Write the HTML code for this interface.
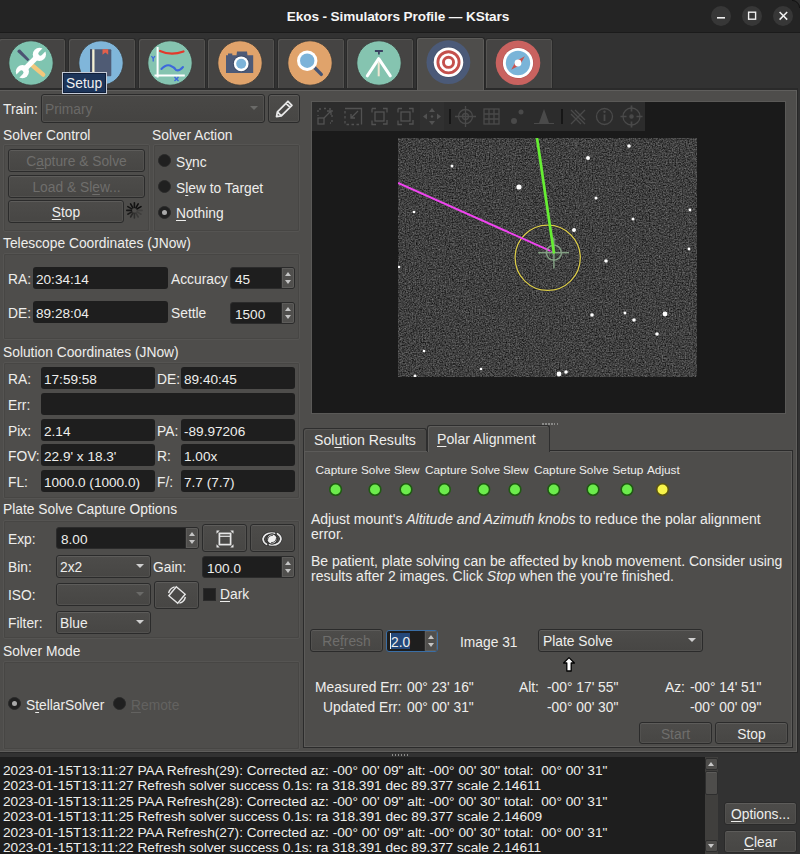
<!DOCTYPE html>
<html><head><meta charset="utf-8">
<style>
*{box-sizing:border-box;margin:0;padding:0}
html,body{width:800px;height:854px;overflow:hidden;background:#323232}
body{position:relative;font-family:"Liberation Sans",sans-serif;font-size:13.8px;color:#eeeeec}
.a{position:absolute}
.t{position:absolute;white-space:pre;line-height:20px}
.dis{color:#6f6e6c}
.title{left:0;top:0;width:800px;height:33px;background:#242424;border-bottom:1px solid #1b1b1b}
.wb{position:absolute;top:6px;width:20px;height:20px;border-radius:50%;background:#373737}
.tab{position:absolute;top:38px;width:68px;height:51px;background:#454443;border:1px solid #2a2a2a;border-bottom:none;border-radius:3px 3px 0 0;box-shadow:inset 1px 1px 0 #555452, inset -1px 0 0 #52514f}
.tab.sel{top:37px;height:53px;width:69px;background:#4e4d4b;z-index:3;border-color:#262626;box-shadow:inset 1px 1px 0 #5c5b59, inset -1px 0 0 #5c5b59}
.panel{left:-2px;top:88px;width:800px;height:665px;background:#4e4d4b;border:1px solid #272727;border-top:2px solid #2a2a2a;box-shadow:inset -1px -1px 0 #5f5e5c, inset 1px 1px 0 #5f5e5c}
.grp{position:absolute;border:1px solid #555452;border-radius:2px;box-shadow:inset 1px 1px 0 #474644, inset -1px -1px 0 #474644}
.fld{font-size:13.6px;position:absolute;background:#1e1e1e;border-radius:3px;height:22px;display:flex;align-items:center;padding-left:3px;padding-top:2px;white-space:pre}
.btn{position:absolute;border:1px solid #2b2b2b;border-radius:3px;background:linear-gradient(#4d4c4a,#474644);box-shadow:inset 0 1px 0 #5d5c5a, inset 0 0 0 1px #52514f;display:flex;align-items:center;justify-content:center;white-space:pre;padding-top:2px}
.cmb{position:absolute;border:1px solid #2b2b2b;border-radius:3px;background:linear-gradient(#4d4c4a,#474644);box-shadow:inset 0 1px 0 #5d5c5a, inset 0 0 0 1px #52514f;display:flex;align-items:center;padding-left:3px;padding-top:2px;white-space:pre}
.arr{position:absolute;right:6px;top:50%;margin-top:-2.5px;width:0;height:0;border-left:4px solid transparent;border-right:4px solid transparent;border-top:4px solid #cfcfcf}
.spin{font-size:13.6px;position:absolute;background:#1e1e1e;border-radius:3px;height:22px;display:flex;align-items:center;padding-left:4px;padding-top:2px;white-space:pre;border:1px solid #2b2b2b}
.sb{position:absolute;right:0;top:0;bottom:0;width:13px;background:#504f4d;border-left:1px solid #2b2b2b;border-radius:0 2px 2px 0;box-shadow:inset 0 0 0 1px #5d5c5a}
.sb:before{content:"";position:absolute;left:2.5px;top:4px;border-left:3.5px solid transparent;border-right:3.5px solid transparent;border-bottom:4px solid #c4c4c4}
.sb:after{content:"";position:absolute;left:2.5px;bottom:4px;border-left:3.5px solid transparent;border-right:3.5px solid transparent;border-top:4px solid #c4c4c4}
.rad{position:absolute;width:13px;height:13px;border-radius:50%;background:#202020;border:1px solid #2a2a2a}
.rad.on:after{content:"";position:absolute;left:3px;top:3px;width:5px;height:5px;border-radius:50%;background:#a9a9a9}
.u{text-decoration:underline;text-underline-offset:2px}
</style></head><body>

<!-- TITLE BAR -->
<div class="a title"></div>
<div class="t" style="left:0;width:796px;top:6.5px;text-align:center;font-weight:bold;font-size:13.6px;letter-spacing:-0.1px;color:#f6f6f6">Ekos - Simulators Profile — KStars</div>
<div class="wb" style="left:711px"></div>
<div class="wb" style="left:742px"></div>
<div class="wb" style="left:773px"></div>

<svg class="a" style="left:792px;top:0" width="8" height="8" viewBox="0 0 8 8"><path d="M0 0 H8 V8 A8 8 0 0 0 0 0Z" fill="#2e2e2e"/><path d="M0 0.4 A7.6 7.6 0 0 1 7.6 8" fill="none" stroke="#141414" stroke-width="1"/></svg>
<!-- TABS -->
<div class="tab" style="left:-2px"></div>
<div class="tab" style="left:68px"></div>
<div class="tab" style="left:138px"></div>
<div class="tab" style="left:207px"></div>
<div class="tab" style="left:277px"></div>
<div class="tab" style="left:346px"></div>
<div class="tab sel" style="left:416px"></div>
<div class="tab" style="left:485px"></div>


<!-- TAB ICONS -->
<svg class="a" style="left:8px;top:40px;z-index:4" width="46" height="46" viewBox="0 0 46 46">
<circle cx="23" cy="23" r="22.2" fill="#7fc4b0" stroke="#3a3a38" stroke-width="0.8"/>
<path d="M9.3 11.8 Q9.5 9.3 12 9.6 L21.5 19.4 L19.6 21.3 Z" fill="#4b5272"/>
<line x1="25" y1="26" x2="35.2" y2="34.6" stroke="#f3c87c" stroke-width="4.4" stroke-linecap="round"/>
<line x1="14.3" y1="31.6" x2="31.4" y2="14.4" stroke="#fff" stroke-width="5.2"/>
<circle cx="31.4" cy="14.4" r="6.6" fill="#fff"/><circle cx="14.4" cy="31.6" r="6.6" fill="#fff"/>
<line x1="32.4" y1="13.4" x2="36.8" y2="9" stroke="#7fc4b0" stroke-width="4.2" stroke-linecap="round"/>
<line x1="13.4" y1="32.6" x2="9" y2="37" stroke="#7fc4b0" stroke-width="4.2" stroke-linecap="round"/>
</svg>
<svg class="a" style="left:78px;top:40px;z-index:4" width="46" height="46" viewBox="0 0 46 46">
<circle cx="23" cy="23" r="22.2" fill="#80b6da" stroke="#3a3a38" stroke-width="0.8"/>
<rect x="12" y="9.3" width="21.3" height="27" rx="1" fill="#4f5b74"/>
<rect x="12" y="9.3" width="2" height="27" fill="#3f4962"/>
<rect x="14.2" y="9.3" width="2.3" height="27" fill="#f4efd2"/>
<path d="M24.5 9.3 H30.2 V14.8 L27.35 12.6 L24.5 14.8Z" fill="#e2604c"/>
</svg>
<svg class="a" style="left:147px;top:40px;z-index:4" width="46" height="46" viewBox="0 0 46 46">
<circle cx="23" cy="23" r="22.2" fill="#85c4b0" stroke="#3a3a38" stroke-width="0.8"/>
<path d="M10.6 7 V37.5 M7.5 35.5 H37.8" stroke="#fff" stroke-width="2" fill="none"/>
<path d="M13 11 Q24 16 36.5 11.5" stroke="#e3392b" stroke-width="2.2" fill="none" stroke-linecap="round"/>
<path d="M14.4 29 Q19 24 23 25.5 Q27 27 29 30 Q32 31.5 36 27" stroke="#3d68dc" stroke-width="2" fill="none" stroke-linecap="round"/>
<path d="M4.5 16 L6.2 18.5 L7.9 16 M6.2 18.5 V21.5" stroke="#3d68dc" stroke-width="1.3" fill="none"/>
<path d="M27.5 37 L31.5 41 M31.5 37 L27.5 41" stroke="#3d68dc" stroke-width="1.4" fill="none"/>
</svg>
<svg class="a" style="left:217px;top:40px;z-index:4" width="46" height="46" viewBox="0 0 46 46">
<circle cx="23" cy="23" r="22.2" fill="#e0a36b" stroke="#3a3a38" stroke-width="0.8"/>
<path d="M9 15.2 H11 V13.6 H15.3 V15.2 H19.5 L20 11.5 H30 L30.5 15.2 H36.2 V33 H9Z" fill="#4d5a77"/>
<circle cx="24.2" cy="23.8" r="8.3" fill="#3d4a66"/>
<circle cx="24.2" cy="23.8" r="7.4" fill="#fff"/>
<circle cx="24.2" cy="23.8" r="5" fill="#7cb3d9"/>
</svg>
<svg class="a" style="left:287px;top:40px;z-index:4" width="46" height="46" viewBox="0 0 46 46">
<circle cx="23" cy="23" r="22.2" fill="#e0a36b" stroke="#3a3a38" stroke-width="0.8"/>
<line x1="27" y1="27" x2="34.3" y2="34.4" stroke="#465574" stroke-width="3.4" stroke-linecap="round"/>
<circle cx="20.2" cy="20.7" r="10.2" fill="#fff"/>
<circle cx="20.2" cy="20.7" r="7.2" fill="#7cb3d9"/>
</svg>
<svg class="a" style="left:356px;top:40px;z-index:4" width="46" height="46" viewBox="0 0 46 46">
<circle cx="23" cy="23" r="22.2" fill="#85c4b0" stroke="#3a3a38" stroke-width="0.8"/>
<rect x="18.9" y="10" width="8" height="2" fill="#3b4262"/>
<rect x="22" y="11.5" width="1.8" height="3" fill="#3b4262"/>
<path d="M22.7 22 V36.3" stroke="#efe6d2" stroke-width="2" fill="none"/>
<path d="M11.3 35.8 L22.7 18.7 L34.3 35.8" stroke="#fff" stroke-width="3" fill="none" stroke-linecap="round" stroke-linejoin="round"/>
</svg>
<svg class="a" style="left:425px;top:39px;z-index:4" width="46" height="46" viewBox="0 0 46 46">
<circle cx="23.4" cy="23.2" r="21.9" fill="#4b5a78"/>
<circle cx="23.5" cy="23.3" r="15.3" fill="#3b4862"/>
<circle cx="23.5" cy="23.3" r="14.8" fill="#fff"/>
<circle cx="23.5" cy="23.3" r="10.6" fill="none" stroke="#c4504c" stroke-width="2.85"/>
<circle cx="23.5" cy="23.3" r="5.05" fill="none" stroke="#c4504c" stroke-width="2.9"/>
</svg>
<svg class="a" style="left:495px;top:40px;z-index:4" width="46" height="46" viewBox="0 0 46 46">
<circle cx="23" cy="22.8" r="22.3" fill="#c9625f"/>
<circle cx="23" cy="23" r="15.5" fill="#a84a48"/>
<circle cx="23" cy="23" r="15.1" fill="#fff"/>
<circle cx="23" cy="23" r="12.2" fill="#7ab4d8"/>
<path d="M29.8 16.2 L25 25 L16.2 29.8 L21 21Z" fill="#c9534f"/>
<circle cx="23" cy="23" r="3.4" fill="#fff"/>
</svg>
<!-- tooltip -->
<div class="a" style="left:62px;top:72px;width:45px;height:22px;background:#1d355a;border:1px solid #c4cad6;box-shadow:inset 0 0 0 1px #0f1f3a;z-index:10"></div>
<div class="t" style="left:66px;top:73.5px;z-index:11;color:#f0f0f0">Setup</div>
<!-- window buttons icons -->
<svg class="a" style="left:700px;top:0" width="100" height="33" viewBox="700 0 100 33">
<path d="M717 17.8 H725" stroke="#f0f0f0" stroke-width="1.6"/>
<rect x="748.6" y="12.2" width="7" height="7" fill="none" stroke="#f0f0f0" stroke-width="1.4"/>
<path d="M779.6 12 L787.2 19.6 M787.2 12 L779.6 19.6" stroke="#f0f0f0" stroke-width="1.5"/>
</svg>

<!-- PANEL -->
<div class="a panel"></div>


<!-- LEFT PANEL -->
<div class="t" style="left:3px;top:100px">Train:</div>
<div class="cmb dis" style="left:41px;top:94px;width:224px;height:29px;padding-top:2px;padding-left:3px;background:linear-gradient(#494846,#444341);color:#6a6967">Primary<span class="arr" style="border-top-color:#6a6a68;right:6px"></span></div>
<div class="btn" style="left:268px;top:94px;width:32px;height:29px"><svg width="22" height="22" viewBox="0 0 20 20" style="margin-left:-1px;margin-top:-2px"><path d="M3.2 17 L4 12.6 L13.6 3 L17.2 6.6 L7.6 16.2 Z M11.8 4.8 L15.4 8.4 M4 12.6 L7.6 16.2" fill="none" stroke="#e8e8e8" stroke-width="1.6" stroke-linejoin="round"/></svg></div>

<div class="t" style="left:3px;top:126px">Solver Control</div>
<div class="t" style="left:152px;top:126px">Solver Action</div>
<div class="grp" style="left:3px;top:144px;width:147px;height:88px"></div>
<div class="grp" style="left:153px;top:144px;width:147px;height:88px"></div>
<div class="btn dis" style="left:8px;top:149px;width:137px;height:23px">C<span class="u">a</span>pture &amp; Solve</div>
<div class="btn dis" style="left:8px;top:175px;width:137px;height:23px">Load &amp; Sl<span class="u">e</span>w...</div>
<div class="btn" style="left:8px;top:200px;width:116px;height:23px"><span class="u">S</span>top</div>
<svg class="a" style="left:126px;top:202px" width="17" height="17" viewBox="0 0 17 17"><g stroke="#0c0c0c" stroke-width="1.6" stroke-linecap="round"><line x1="9.90" y1="5.80" x2="12.20" y2="1.82" stroke-opacity="0.95"/><line x1="11.00" y1="6.90" x2="14.98" y2="4.60" stroke-opacity="1.0"/><line x1="11.40" y1="8.40" x2="16.00" y2="8.40" stroke-opacity="0.2"/><line x1="11.00" y1="9.90" x2="14.98" y2="12.20" stroke-opacity="0.22"/><line x1="9.90" y1="11.00" x2="12.20" y2="14.98" stroke-opacity="0.3"/><line x1="8.40" y1="11.40" x2="8.40" y2="16.00" stroke-opacity="0.45"/><line x1="6.90" y1="11.00" x2="4.60" y2="14.98" stroke-opacity="0.55"/><line x1="5.80" y1="9.90" x2="1.82" y2="12.20" stroke-opacity="0.75"/><line x1="5.40" y1="8.40" x2="0.80" y2="8.40" stroke-opacity="0.85"/><line x1="5.80" y1="6.90" x2="1.82" y2="4.60" stroke-opacity="0.85"/><line x1="6.90" y1="5.80" x2="4.60" y2="1.82" stroke-opacity="0.9"/><line x1="8.40" y1="5.40" x2="8.40" y2="0.80" stroke-opacity="0.9"/></g></svg>
<div class="rad" style="left:158px;top:154px"></div>
<div class="rad" style="left:158px;top:180px"></div>
<div class="rad on" style="left:158px;top:206px"></div>
<div class="t" style="left:176px;top:153px">S<span class="u">y</span>nc</div>
<div class="t" style="left:176px;top:179px">S<span class="u">l</span>ew to Target</div>
<div class="t" style="left:176px;top:204px"><span class="u">N</span>othing</div>

<div class="t" style="left:3px;top:234px">Telescope Coordinates (JNow)</div>
<div class="grp" style="left:3px;top:253px;width:297px;height:87px"></div>
<div class="t" style="left:8px;top:270px">RA:</div>
<div class="fld" style="left:33px;top:267px;width:135px">20:34:14</div>
<div class="t" style="left:8px;top:304px">DE:</div>
<div class="fld" style="left:33px;top:301px;width:135px">89:28:04</div>
<div class="t" style="left:171px;top:270px">Accuracy</div>
<div class="spin" style="left:230px;top:267px;width:65px">45<span class="sb"></span></div>
<div class="t" style="left:171px;top:304px">Settle</div>
<div class="spin" style="left:230px;top:302px;width:65px">1500<span class="sb"></span></div>

<div class="t" style="left:3px;top:343px">Solution Coordinates (JNow)</div>
<div class="grp" style="left:3px;top:362px;width:297px;height:137px"></div>
<div class="t" style="left:8px;top:370px">RA:</div>
<div class="fld" style="left:41px;top:367px;width:114px">17:59:58</div>
<div class="t" style="left:157px;top:370px">DE:</div>
<div class="fld" style="left:181px;top:367px;width:114px">89:40:45</div>
<div class="t" style="left:8px;top:396px">Err:</div>
<div class="fld" style="left:41px;top:393px;width:254px"></div>
<div class="t" style="left:8px;top:422px">Pix:</div>
<div class="fld" style="left:41px;top:419px;width:114px">2.14</div>
<div class="t" style="left:157px;top:422px">PA:</div>
<div class="fld" style="left:181px;top:419px;width:114px">-89.97206</div>
<div class="t" style="left:8px;top:447px">FOV:</div>
<div class="fld" style="left:41px;top:444px;width:114px">22.9' x 18.3'</div>
<div class="t" style="left:157px;top:447px">R:</div>
<div class="fld" style="left:181px;top:444px;width:114px">1.00x</div>
<div class="t" style="left:8px;top:473px">FL:</div>
<div class="fld" style="left:41px;top:470px;width:114px">1000.0 (1000.0)</div>
<div class="t" style="left:157px;top:473px">F/:</div>
<div class="fld" style="left:181px;top:470px;width:114px">7.7 (7.7)</div>

<div class="t" style="left:3px;top:500px">Plate Solve Capture Options</div>
<div class="grp" style="left:3px;top:520px;width:297px;height:119px"></div>
<div class="t" style="left:8px;top:530px">Exp:</div>
<div class="spin" style="left:56px;top:527px;width:143px">8.00<span class="sb"></span></div>
<div class="btn" style="left:202px;top:524px;width:45px;height:28px"><svg width="20" height="20" viewBox="0 0 20 20" style="margin-top:-1px"><g fill="#e6e6e6"><path d="M1.5 1.5 h3.2 l-3.2 3.2z M18.5 1.5 h-3.2 l3.2 3.2z M1.5 18.5 h3.2 l-3.2 -3.2z M18.5 18.5 h-3.2 l3.2 -3.2z"/></g><rect x="4.4" y="4.4" width="11.2" height="11.2" fill="none" stroke="#e6e6e6" stroke-width="1.7"/><line x1="4.4" y1="7.3" x2="15.6" y2="7.3" stroke="#e6e6e6" stroke-width="1.2"/></svg></div>
<div class="btn" style="left:250px;top:524px;width:45px;height:28px"><svg width="22" height="16" viewBox="0 0 22 16" style="margin-top:-1px;margin-left:-1px"><g fill="none" stroke-linecap="round"><path d="M13.5 2.3 Q3.5 0.8 2 8 Q2.3 11.5 5.5 13.3" stroke="#2e2e2e" stroke-width="3"/><path d="M8.5 13.7 Q18.5 15.2 20 8 Q19.7 4.5 16.5 2.7" stroke="#2e2e2e" stroke-width="3"/><path d="M13.5 2.3 Q3.5 0.8 2 8 Q2.3 11.5 5.5 13.3" stroke="#e8e8e8" stroke-width="1.7"/><path d="M8.5 13.7 Q18.5 15.2 20 8 Q19.7 4.5 16.5 2.7" stroke="#e8e8e8" stroke-width="1.7"/></g><circle cx="11" cy="8" r="5.2" fill="#efefef" stroke="#2e2e2e" stroke-width="1.2"/><path d="M6.5 9 Q7 4.5 12 4.3" fill="none" stroke="#2e2e2e" stroke-width="0.8"/><path d="M15.5 7 Q15 11.5 10 11.7" fill="none" stroke="#2e2e2e" stroke-width="0.8"/></svg></div>
<div class="t" style="left:8px;top:558px">Bin:</div>
<div class="cmb" style="left:56px;top:555px;width:95px;height:23px">2x2<span class="arr"></span></div>
<div class="t" style="left:153px;top:558px">Gain:</div>
<div class="spin" style="left:202px;top:556px;width:93px">100.0<span class="sb"></span></div>
<div class="t" style="left:8px;top:586px">ISO:</div>
<div class="cmb" style="left:56px;top:583px;width:95px;height:23px"><span class="arr" style="border-top-color:#6a6a68"></span></div>
<div class="btn" style="left:154px;top:581px;width:45px;height:28px"><svg width="22" height="22" viewBox="0 0 22 22" fill="none" stroke="#e6e6e6" stroke-width="1.4" style="margin-top:-2px"><rect x="5.2" y="5.2" width="11.6" height="11.6" transform="rotate(40 11 11)"/><path d="M2.6 9 A8.5 8.5 0 0 1 8.6 2.8 M19.4 13 A8.5 8.5 0 0 1 13.4 19.2"/></svg></div>
<div class="a" style="left:203px;top:588px;width:13px;height:13px;background:#202020;border:1px solid #2a2a2a"></div>
<div class="t" style="left:220px;top:585px"><span class="u">D</span>ark</div>
<div class="t" style="left:8px;top:614px">Filter:</div>
<div class="cmb" style="left:56px;top:611px;width:95px;height:23px">Blue<span class="arr"></span></div>

<div class="t" style="left:3px;top:642px">Solver Mode</div>
<div class="grp" style="left:3px;top:661px;width:297px;height:89px"></div>
<div class="rad on" style="left:8px;top:697px"></div>
<div class="t" style="left:26px;top:696px">S<span class="u">t</span>ellarSolver</div>
<div class="rad" style="left:113px;top:697px"></div>
<div class="t dis" style="left:131px;top:696px;color:#636260"><span class="u">R</span>emote</div>


<!-- RIGHT: VIEW -->
<div class="a" style="left:311px;top:101px;width:475px;height:313px;background:#1a1a1a;border:1px solid #5a5957"></div>
<div class="a" style="left:398px;top:138px;width:299px;height:239px;background:#4a4a4a;overflow:hidden">
<svg width="299" height="239" style="position:absolute;left:0;top:0" color-interpolation-filters="sRGB"><filter id="nz" x="0" y="0" width="100%" height="100%"><feTurbulence type="fractalNoise" baseFrequency="0.7" numOctaves="3" seed="11"/><feColorMatrix type="matrix" values="1 0 0 0 0  1 0 0 0 0  1 0 0 0 0  0 0 0 0 1"/><feGaussianBlur stdDeviation="0.6"/><feComponentTransfer><feFuncR type="linear" slope="0.5" intercept="0.0"/><feFuncG type="linear" slope="0.5" intercept="0.0"/><feFuncB type="linear" slope="0.5" intercept="0.0"/></feComponentTransfer></filter>
<rect width="299" height="239" filter="url(#nz)"/>
</svg>
</div>
<svg class="a" style="left:398px;top:138px" width="299" height="239" viewBox="398 138 299 239">
<g fill="#ffffff">
<circle cx="452" cy="166" r="1.5"/><circle cx="519" cy="187" r="2.6"/><circle cx="588" cy="158" r="2"/><circle cx="629" cy="146" r="1.8"/>
<circle cx="596" cy="198" r="1.5"/><circle cx="633" cy="219" r="1.5"/><circle cx="690" cy="210" r="1.4"/><circle cx="689" cy="249" r="1.4"/>
<circle cx="414" cy="212" r="1.3"/><circle cx="399" cy="267" r="1.3"/><circle cx="574" cy="230" r="2"/><circle cx="606" cy="261" r="1.8"/>
<circle cx="592" cy="315" r="1.8"/><circle cx="625" cy="313" r="1.5"/><circle cx="634" cy="320" r="1.8"/><circle cx="665" cy="314" r="2.4"/>
<circle cx="657" cy="334" r="1.8"/><circle cx="424" cy="351" r="1.3"/><circle cx="481" cy="369" r="1.3"/><circle cx="559" cy="374" r="2.4"/>
<circle cx="566" cy="372" r="1.8"/><circle cx="415" cy="376" r="1.4"/>
</g>
<circle cx="547.7" cy="257.8" r="32.6" fill="none" stroke="#1c1c30" stroke-width="2.6" opacity="0.6"/>
<circle cx="547.7" cy="257.8" r="32.6" fill="none" stroke="#dccd48" stroke-width="1.3"/>
<line x1="398" y1="183" x2="552.5" y2="251.8" stroke="#f044f0" stroke-width="2"/>
<g stroke="#8fb08f" stroke-width="1.5" fill="none" opacity="0.85"><circle cx="553.9" cy="252.7" r="7.5"/><circle cx="553.9" cy="252.7" r="3.5" stroke="#3a4a3a"/><line x1="538.2" y1="252.7" x2="569.1" y2="252.7"/><line x1="553.9" y1="237.5" x2="553.9" y2="268.4"/></g>
<line x1="537" y1="138" x2="554" y2="253.5" stroke="#66ee33" stroke-width="2.7"/>
</svg>
<!-- toolbar -->
<div class="a" style="left:312px;top:102px;width:333px;height:29px;background:#2c2c2c"></div>
<div class="a" style="left:420px;top:102px;width:24px;height:29px;background:#303030"></div>
<svg class="a" style="left:313px;top:102px" width="332" height="29" viewBox="313 102 332 29">
<g fill="none" stroke="#525252" stroke-width="1.3">
<path d="M318 112 v-3 h3 M324 108.5 h2 M329 109 h3 v3 M332 115 v2 M332 120 v3 h-2 M318 115 v1" stroke-dasharray="2 2"/>
<rect x="318" y="118" width="6" height="6"/><path d="M324 118 L331 111 M327 111 h4 v4"/>
<path d="M345 108.5 h16.5 v16"/><path d="M359 124.5 h-14 v-14" stroke-dasharray="2.5 2.5"/><path d="M358 111 L351 118 M351 114 v4 h4"/>
<path d="M372 108.5 h4 M383 108.5 h4 v4 M387 120 v4 h-4 M376 124.5 h-4 v-4 M372 112.5 v-4"/><rect x="375" y="112" width="9" height="9"/>
<path d="M398 108.5 h4 M409 108.5 h4 v4 M413 120 v4 h-4 M402 124.5 h-4 v-4 M398 112.5 v-4"/><rect x="401" y="112" width="9" height="9"/>
</g>
<g fill="#525252"><path d="M432 108 l-3 4 h6z M432 125 l-3 -4 h6z M423 116.5 l4 -3 v6z M441 116.5 l-4 -3 v6z"/><circle cx="432" cy="116.5" r="1.2"/></g>
<rect x="449" y="109" width="2" height="15" fill="#161616"/>
<rect x="561" y="109" width="2" height="15" fill="#161616"/>
<g fill="none" stroke="#4a4a4a" stroke-width="1.3">
<circle cx="465.5" cy="116.5" r="7"/><circle cx="465.5" cy="116.5" r="3"/><path d="M455 116.5 h21 M465.5 106 v21"/>
<rect x="484" y="109" width="15" height="15"/><path d="M489 109 v15 M494 109 v15 M484 114 h15 M484 119 h15"/>
<path d="M571 110 l14 14 M585 110 l-14 14 M571 114 l10 10 M575 110 l10 10"/>
<circle cx="604.5" cy="116.5" r="8"/><path d="M604.5 114.5 v6.5" stroke-width="1.8"/>
<circle cx="631.5" cy="116.5" r="8.5"/><circle cx="631.5" cy="116.5" r="1.6" fill="#4a4a4a"/><path d="M620.5 116.5 h6 M636.5 116.5 h6 M631.5 105.5 v6 M631.5 121.5 v6" stroke-width="1.7"/>
</g>
<g fill="#4a4a4a"><circle cx="514" cy="121" r="3"/><circle cx="521" cy="112" r="2.5"/><path d="M539 123 l5 -14 l5 14z"/><circle cx="604.5" cy="111.8" r="1.2"/></g>
<path d="M534 123.5 h20" stroke="#4a4a4a" stroke-width="1"/>
</svg>

<!-- splitter dots -->
<div class="a" style="left:542px;top:423px;width:16px;height:2px;background:repeating-linear-gradient(90deg,#8a8a88 0 1.5px,transparent 1.5px 3px)"></div>

<!-- TAB WIDGET -->
<div class="a" style="left:303px;top:450px;width:490px;height:298px;border:1px solid #2b2b2b;box-shadow:inset 1px 1px 0 #5c5b59, inset -1px -1px 0 #5c5b59;background:#4e4d4b"></div>
<div class="a" style="left:303px;top:428px;width:124px;height:23px;background:#494846;border:1px solid #2e2e2e;border-bottom:none;border-radius:3px 3px 0 0;box-shadow:inset 1px 1px 0 #555452"></div>
<div class="a" style="left:427px;top:425px;width:123px;height:27px;background:#4e4d4b;border:1px solid #2e2e2e;border-bottom:none;border-radius:3px 3px 0 0;box-shadow:inset 1px 1px 0 #5f5e5c"></div>
<div class="t" style="left:314px;top:430px;font-size:14.1px">Sol<span class="u">u</span>tion Results</div>
<div class="t" style="left:437px;top:429px;font-size:14.1px"><span class="u">P</span>olar Alignment</div>

<div class="a" style="left:300px;top:460px;width:400px;height:14px;font-size:11.8px;line-height:14px">
<span class="t" style="left:15.6px">Capture</span><span class="t" style="left:61px">Solve</span><span class="t" style="left:94px">Slew</span><span class="t" style="left:125px">Capture</span><span class="t" style="left:170.6px">Solve</span><span class="t" style="left:203px">Slew</span><span class="t" style="left:234px">Capture</span><span class="t" style="left:279px">Solve</span><span class="t" style="left:312.5px">Setup</span><span class="t" style="left:347px">Adjust</span>
</div>
<svg class="a" style="left:300px;top:480px" width="400" height="20">
<g stroke="#1f5a12" stroke-width="1.6" fill="#6cec4c">
<circle cx="35.6" cy="9.5" r="5.8"/><circle cx="75" cy="9.5" r="5.8"/><circle cx="106" cy="9.5" r="5.8"/><circle cx="144.4" cy="9.5" r="5.8"/><circle cx="183.75" cy="9.5" r="5.8"/><circle cx="215" cy="9.5" r="5.8"/><circle cx="253.75" cy="9.5" r="5.8"/><circle cx="293" cy="9.5" r="5.8"/><circle cx="327" cy="9.5" r="5.8"/>
<circle cx="362.5" cy="9.5" r="5.8" fill="#f8f44a" stroke="#5a5412"/>
</g></svg>

<div class="t" style="left:311px;top:509px;font-size:14px">Adjust mount's <i>Altitude and Azimuth knobs</i> to reduce the polar alignment</div>
<div class="t" style="left:311px;top:524px;font-size:14px">error.</div>
<div class="t" style="left:311px;top:551px;font-size:14px">Be patient, plate solving can be affected by knob movement. Consider using</div>
<div class="t" style="left:311px;top:566px;font-size:14px">results after 2 images. Click <i>Stop</i> when the you're finished.</div>

<div class="btn dis" style="left:310px;top:629px;width:73px;height:23px">Re<span class="u">f</span>resh</div>
<div class="spin" style="left:386px;top:630px;width:52px;border-color:#3a6ea5">2.0<span class="sb"></span></div>
<div class="a" style="left:390px;top:633px;width:20px;height:16px;background:#24487a"></div>
<div class="t" style="left:391px;top:633px">2.0</div>
<div class="a" style="left:390px;top:633px;width:1px;height:16px;background:#eeeeec"></div>
<div class="t" style="left:460px;top:633px">Image 31</div>
<div class="cmb" style="left:538px;top:629px;width:165px;height:23px;padding-top:2px;padding-left:4px">Plate Solve<span class="arr"></span></div>
<svg class="a" style="left:562px;top:656px" width="14" height="17" viewBox="0 0 14 17"><path d="M7 1.6 L12.4 7 H9.2 V15 H4.8 V7 H1.6 Z" fill="#fff" stroke="#000" stroke-width="1.3" stroke-linejoin="round"/></svg>

<div class="t" style="left:315px;top:678px">Measured Err:</div>
<div class="t" style="left:407px;top:678px">00° 23' 16"</div>
<div class="t" style="left:519px;top:678px">Alt:</div>
<div class="t" style="left:547px;top:678px">-00° 17' 55"</div>
<div class="t" style="left:665px;top:678px">Az:</div>
<div class="t" style="left:690px;top:678px">-00° 14' 51"</div>
<div class="t" style="left:323px;top:698px">Updated Err:</div>
<div class="t" style="left:407px;top:698px">00° 00' 31"</div>
<div class="t" style="left:547px;top:698px">-00° 00' 30"</div>
<div class="t" style="left:690px;top:698px">-00° 00' 09"</div>
<div class="btn dis" style="left:639px;top:722px;width:73px;height:22px">Start</div>
<div class="btn" style="left:715px;top:722px;width:73px;height:22px">Stop</div>

<!-- BOTTOM LOG -->
<div class="a" style="left:392px;top:754px;width:16px;height:2px;background:repeating-linear-gradient(90deg,#8a8a88 0 1.5px,transparent 1.5px 3px)"></div>
<div class="a" style="left:0;top:757px;width:705px;height:97px;background:#1e1e1e"></div>
<div class="a" style="left:705px;top:757px;width:13px;height:97px;background:#403f3d"></div>
<div class="a" style="left:705px;top:758px;width:13px;height:12px;background:#4e4d4b;border:1px solid #2e2e2e;border-radius:2px"></div>
<div class="a" style="left:708px;top:762px;width:0;height:0;border-left:3.5px solid transparent;border-right:3.5px solid transparent;border-bottom:4px solid #c8c8c8"></div>
<div class="a" style="left:705px;top:771px;width:13px;height:24px;background:#4e4d4b;border:1px solid #2e2e2e;border-radius:2px;box-shadow:inset 0 1px 0 #5c5b59"></div>
<div class="a" style="left:705px;top:840px;width:13px;height:12px;background:#4e4d4b;border:1px solid #2e2e2e;border-radius:2px"></div>
<div class="a" style="left:708px;top:844px;width:0;height:0;border-left:3.5px solid transparent;border-right:3.5px solid transparent;border-top:4px solid #c8c8c8"></div>
<div class="a" style="left:3px;top:763px;line-height:15.4px;white-space:pre;font-size:13.7px">2023-01-15T13:11:27 PAA Refresh(29): Corrected az: -00° 00' 09" alt: -00° 00' 30" total:  00° 00' 31"
2023-01-15T13:11:27 Refresh solver success 0.1s: ra 318.391 dec 89.377 scale 2.14611
2023-01-15T13:11:25 PAA Refresh(28): Corrected az: -00° 00' 09" alt: -00° 00' 30" total:  00° 00' 31"
2023-01-15T13:11:25 Refresh solver success 0.1s: ra 318.391 dec 89.377 scale 2.14609
2023-01-15T13:11:22 PAA Refresh(27): Corrected az: -00° 00' 09" alt: -00° 00' 30" total:  00° 00' 31"
2023-01-15T13:11:22 Refresh solver success 0.1s: ra 318.391 dec 89.377 scale 2.14611</div>
<div class="btn" style="left:724px;top:802px;width:73px;height:23px;border-color:#2a2a2a"><span class="u">O</span>ptions...</div>
<div class="btn" style="left:724px;top:830px;width:73px;height:23px;border-color:#2a2a2a"><span class="u">C</span>lear</div>

</body></html>
